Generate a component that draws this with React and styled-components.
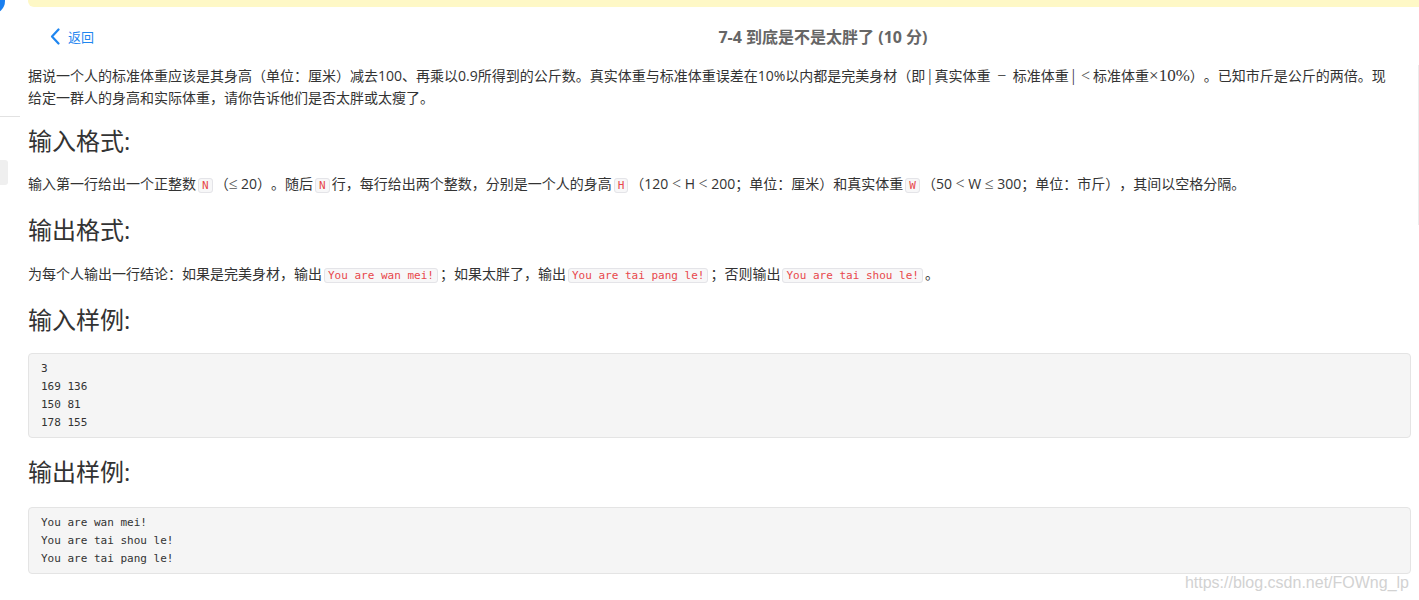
import React from "react";
import styled, { createGlobalStyle } from "styled-components";

const GlobalStyle = createGlobalStyle`
  html, body {
    margin: 0;
    padding: 0;
    background: #fff;
    overflow: hidden;
  }
  body {
    font-family: "Open Sans", "Noto Sans CJK SC", sans-serif;
    color: #333;
    text-spacing-trim: space-all;
  }
`;

const Page = styled.div`
  display: flex;
  height: 600px;
  position: relative;
`;

const LeftRail = styled.div`
  width: 20px;
  margin-right: 8px;
  display: flex;
  flex-direction: column;
`;

const RailDot = styled.div`
  width: 26px;
  height: 26px;
  margin: -12px 0 0 -21px;
  border-radius: 50%;
  background: #1a7ff0;
`;

const RailLine = styled.div`
  height: 1px;
  margin-top: 102px;
  background: #e2e2e2;
`;

const RailTab = styled.div`
  width: 8px;
  height: 25px;
  margin-top: 43px;
  border-radius: 0 3px 3px 0;
  background: #efefef;
`;

const Column = styled.div`
  flex: 1;
  display: flex;
  flex-direction: column;
`;

const Notice = styled.div`
  height: 7px;
  background: #fef8c6;
  border-bottom-left-radius: 6px;
`;

const Body = styled.div`
  display: flex;
`;

const Main = styled.main`
  flex: 1;
  padding-right: 7px;
`;

const RightRail = styled.div`
  width: 1px;
  height: 160px;
  margin-top: 58px;
  background: #ececec;
`;

const Header = styled.header`
  height: 58px;
  display: flex;
  align-items: center;
`;

const BackLink = styled.a`
  display: flex;
  align-items: center;
  gap: 8px;
  margin-left: 22px;
  color: #1f86f0;
  font-size: 13px;
  text-decoration: none;
  cursor: pointer;
`;

const Title = styled.h1`
  flex: 1;
  margin: 0;
  padding-left: 141px;
  text-align: center;
  font-size: 16px;
  font-weight: 700;
  color: #666;
`;

const Text = styled.p`
  margin: ${(p) => p.$top || 0}px 0 0;
  font-size: 14px;
  line-height: 22px;
  color: #333;
`;

const Heading = styled.h2`
  margin: ${(p) => p.$top || 0}px 0 0;
  font-size: 24px;
  font-weight: 400;
  line-height: 34px;
  color: #333;
`;

const Math = styled.span`
  font-family: "Liberation Serif", "DejaVu Serif", serif;
  font-size: ${(p) => (p.$big ? 17 : 16)}px;
  color: ${(p) => (p.$soft ? "#555" : "#333")};
  margin: 0 ${(p) => (p.$gap ? 3 : 0)}px;
`;

const Code = styled.code`
  margin: 0 2px;
  padding: 0 3px;
  font-family: "DejaVu Sans Mono", "Liberation Mono", monospace;
  font-size: 11px;
  color: #e8474c;
  background: #f7f7f8;
  border: 1px solid #e4e4e8;
  border-radius: 3px;
`;

const Sample = styled.pre`
  margin: ${(p) => p.$top || 0}px 0 0;
  padding: 6px 12px 5px;
  font-family: "DejaVu Sans Mono", "Liberation Mono", monospace;
  font-size: 11px;
  line-height: 18px;
  color: #333;
  background: #f5f5f5;
  border: 1px solid #e4e4e4;
  border-radius: 4px;
`;

const Watermark = styled.span`
  position: absolute;
  right: 10px;
  bottom: 8px;
  font-family: "Liberation Sans", Arial, sans-serif;
  font-size: 16px;
  color: #d2d2d2;
`;

function Chevron() {
  return (
    <svg width="10" height="17" viewBox="0 0 10 17" fill="none">
      <path
        d="M8.5 1.5 L2 8.5 L8.5 15.5"
        stroke="#1f86f0"
        strokeWidth="2.2"
        strokeLinecap="round"
        strokeLinejoin="round"
      />
    </svg>
  );
}

export default function App() {
  return (
    <>
      <GlobalStyle />
      <Page>
        <LeftRail>
          <RailDot />
          <RailLine />
          <RailTab />
        </LeftRail>
        <Column>
          <Notice />
          <Body>
            <Main>
              <Header>
                <BackLink>
                  <Chevron />
                  返回
                </BackLink>
                <Title>7-4 到底是不是太胖了 (10 分)</Title>
              </Header>

              <Text>
                据说一个人的标准体重应该是其身高（单位：厘米）减去100、再乘以0.9所得到的公斤数。真实体重与标准体重误差在10%以内都是完美身材（即
                <Math $gap>|</Math>真实体重 <Math $gap>−</Math> 标准体重<Math $gap>|</Math>
                <Math $soft $gap>&lt;</Math>标准体重<Math $big>×10%</Math>）。已知市斤是公斤的两倍。现
                <br />
                给定一群人的身高和实际体重，请你告诉他们是否太胖或太瘦了。
              </Text>

              <Heading $top={15}>输入格式:</Heading>
              <Text $top={15}>
                输入第一行给出一个正整数<Code>N</Code>（<Math $soft>≤</Math> 20）。随后<Code>N</Code>
                行，每行给出两个整数，分别是一个人的身高<Code>H</Code>（120 <Math $soft>&lt;</Math> H{" "}
                <Math $soft>&lt;</Math> 200；单位：厘米）和真实体重<Code>W</Code>（50{" "}
                <Math $soft>&lt;</Math> W <Math $soft>≤</Math> 300；单位：市斤），其间以空格分隔。
              </Text>

              <Heading $top={16}>输出格式:</Heading>
              <Text $top={16}>
                为每个人输出一行结论：如果是完美身材，输出<Code>You are wan mei!</Code>；如果太胖了，输出
                <Code>You are tai pang le!</Code>；否则输出<Code>You are tai shou le!</Code>。
              </Text>

              <Heading $top={16}>输入样例:</Heading>
              <Sample $top={16}>{`3
169 136
150 81
178 155`}</Sample>

              <Heading $top={17}>输出样例:</Heading>
              <Sample $top={18}>{`You are wan mei!
You are tai shou le!
You are tai pang le!`}</Sample>
            </Main>
            <RightRail />
          </Body>
        </Column>
        <Watermark>https://blog.csdn.net/FOWng_lp</Watermark>
      </Page>
    </>
  );
}
